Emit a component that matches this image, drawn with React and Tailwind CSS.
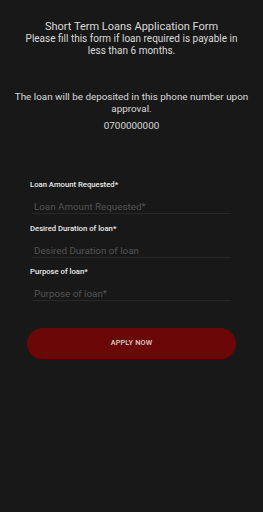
import React from 'react';

const Field = ({ label, placeholder }) => (
  <div className="flex flex-col">
    <label className="block text-[7.7px] font-medium text-[#ececec] leading-[10px] pl-[30px]">{label}</label>
    <div className="mx-[32px] mt-[10px] border-b border-[#282828] pl-[2px] text-[9.8px] leading-[13px]">
      <span className="text-[#545454]">{placeholder}</span>
    </div>
  </div>
);

export default function App() {
  return (
    <div className="w-[263px] h-[512px] bg-[#181818] flex flex-col font-['Roboto',sans-serif]">
      <div className="pt-[19.5px] flex flex-col items-center text-center text-[#dadada]">
        <h1 className="text-[11px] leading-[13px]">Short Term Loans Application Form</h1>
        <p className="text-[10px] leading-[12px] px-[24px]">
          Please fill this form if loan required is payable in less than 6 months.
        </p>
      </div>
      <div className="mt-[34.5px] flex flex-col items-center text-center text-[#dadada]">
        <p className="text-[9.9px] leading-[12px] px-[10px]">
          The loan will be deposited in this phone number upon approval.
        </p>
        <p className="text-[9.9px] leading-[12px] mt-[5px]">0700000000</p>
      </div>
      <div className="mt-[48px] flex flex-col gap-[9.5px]">
        <Field label="Loan Amount Requested*" placeholder="Loan Amount Requested*" />
        <Field label="Desired Duration of loan*" placeholder="Desired Duration of loan" />
        <Field label="Purpose of loan*" placeholder="Purpose of loan*" />
      </div>
      <button className="mt-[27px] mx-[27px] h-[31px] rounded-full bg-[#6b0707] text-[7.3px] font-medium text-[#e4d0d0] tracking-wide">
        APPLY NOW
      </button>
    </div>
  );
}
